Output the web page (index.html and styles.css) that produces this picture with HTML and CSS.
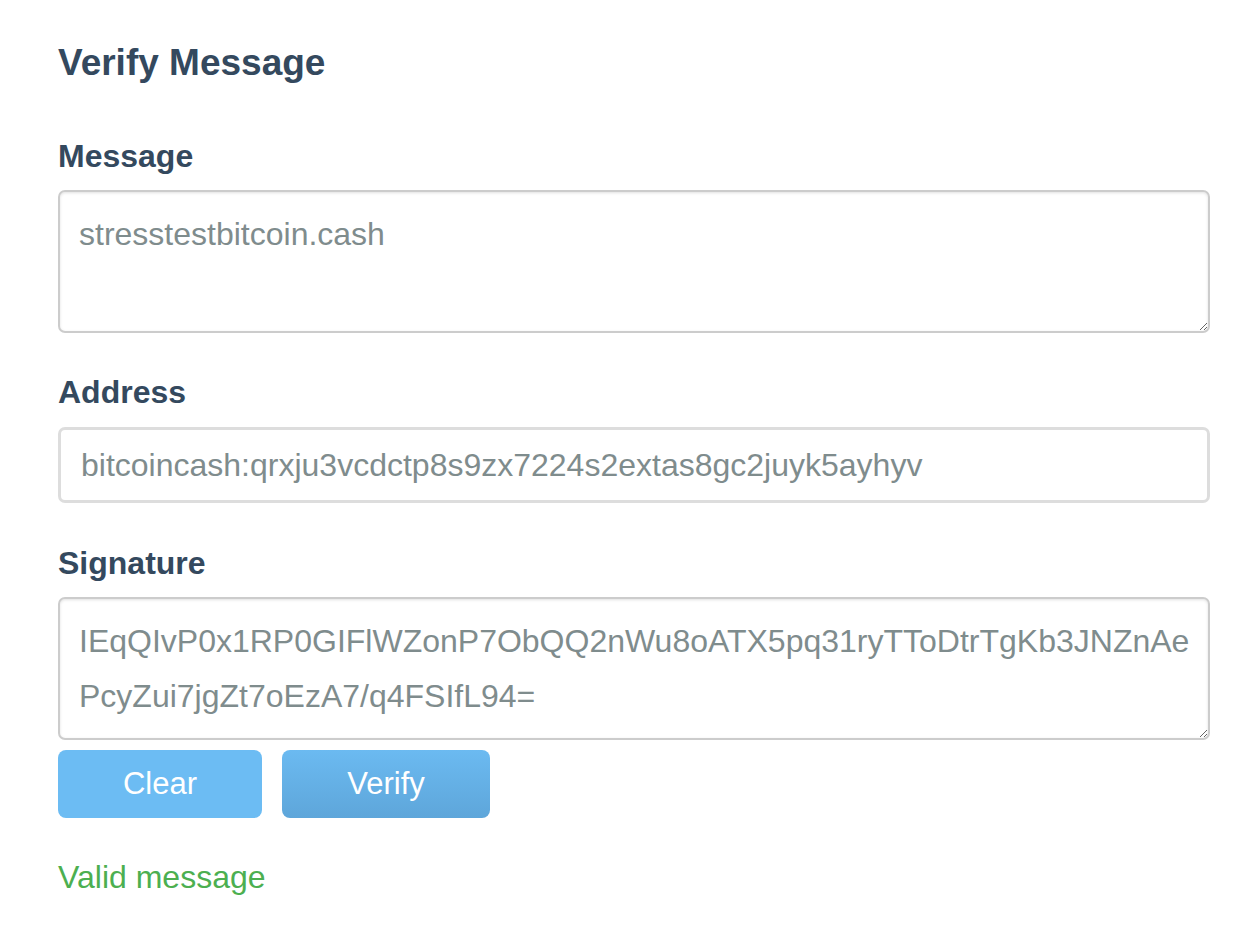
FILE: index.html
```html
<!DOCTYPE html>
<html lang="en">
<head>
<meta charset="utf-8">
<title>Verify Message</title>
<link rel="stylesheet" href="styles.css">
</head>
<body>
<main class="page">
  <h1 class="title">Verify Message</h1>
  <form class="form">
    <div class="field">
      <label class="label" for="msg">Message</label>
      <textarea id="msg" class="area">stresstestbitcoin.cash</textarea>
    </div>
    <div class="field field-address">
      <label class="label" for="addr">Address</label>
      <input id="addr" class="input" type="text" value="bitcoincash:qrxju3vcdctp8s9zx7224s2extas8gc2juyk5ayhyv">
    </div>
    <div class="field field-last">
      <label class="label" for="sig">Signature</label>
      <textarea id="sig" class="area">IEqQIvP0x1RP0GIFlWZonP7ObQQ2nWu8oATX5pq31ryTToDtrTgKb3JNZnAePcyZui7jgZt7oEzA7/q4FSIfL94=</textarea>
    </div>
    <div class="actions">
      <button type="button" class="btn btn-clear">Clear</button>
      <button type="button" class="btn btn-verify">Verify</button>
    </div>
  </form>
  <p class="status">Valid message</p>
</main>
</body>
</html>
```
FILE: styles.css
```css
html, body {
  margin: 0;
  padding: 0;
  background: #ffffff;
}

body {
  font-family: "Liberation Sans", Arial, Helvetica, sans-serif;
  color: #34495e;
}

.page {
  padding: 41px 38px 0 58px;
}

.title {
  margin: 0;
  font-size: 37px;
  line-height: 44px;
  font-weight: bold;
  color: #34495e;
}

.form {
  margin-top: 51px;
}

.field {
  display: flex;
  flex-direction: column;
  margin-bottom: 39px;
}

.field-address {
  margin-bottom: 40px;
}

.field-address .label {
  margin-bottom: 15px;
}

.field-last {
  margin-bottom: 10px;
}

.label {
  font-size: 32px;
  line-height: 40px;
  font-weight: bold;
  color: #34495e;
  margin-bottom: 14px;
}

.area {
  box-sizing: border-box;
  width: 100%;
  height: 143px;
  padding: 15px 15px 15px 19px;
  border: 2px solid #cccccc;
  border-radius: 7px;
  box-shadow: inset 0 1px 3px rgba(0, 0, 0, 0.12);
  font-family: "Liberation Sans", Arial, Helvetica, sans-serif;
  font-size: 32px;
  line-height: 55px;
  color: #7f8c8d;
  background: #ffffff;
  resize: vertical;
  outline: none;
  word-break: break-all;
}

.input {
  box-sizing: border-box;
  width: 100%;
  height: 76px;
  padding: 0 20px;
  border: 3px solid #dddddd;
  border-radius: 7px;
  font-family: "Liberation Sans", Arial, Helvetica, sans-serif;
  font-size: 32px;
  color: #7f8c8d;
  background: #ffffff;
  outline: none;
}

.actions {
  display: flex;
  gap: 20px;
}

.btn {
  height: 68px;
  border: none;
  border-radius: 8px;
  font-family: "Liberation Sans", Arial, Helvetica, sans-serif;
  font-size: 31px;
  color: #ffffff;
  cursor: pointer;
  padding: 0;
}

.btn-clear {
  width: 204px;
  background: #6cbcf3;
}

.btn-verify {
  width: 208px;
  background: linear-gradient(to bottom, #6bbaf1, #5ea6da);
}

.status {
  margin: 39px 0 0;
  font-size: 32px;
  line-height: 40px;
  color: #4caf50;
}
```
